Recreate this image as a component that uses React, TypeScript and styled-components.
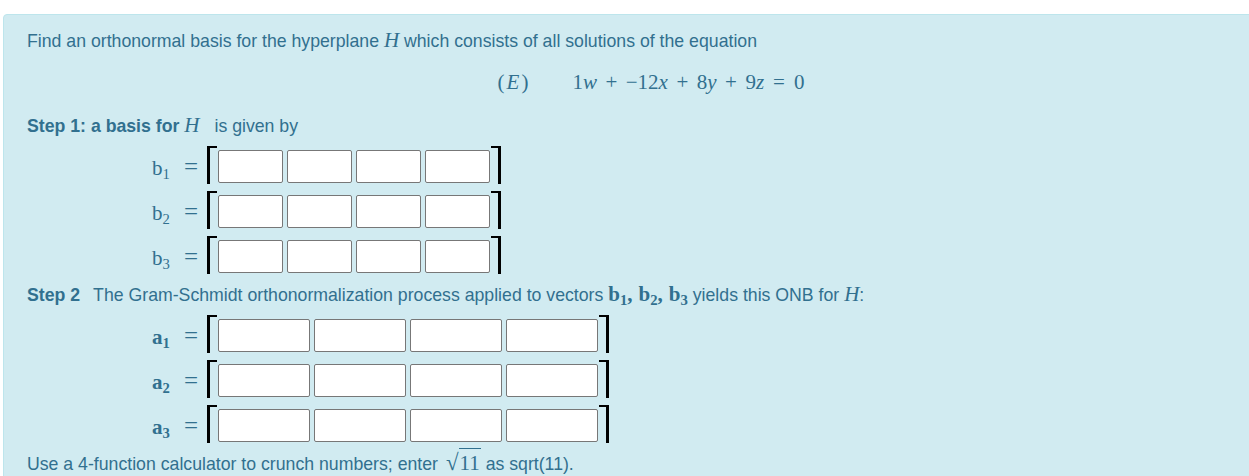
import styled, { createGlobalStyle } from "styled-components";

const GlobalStyle = createGlobalStyle`
  html, body {
    margin: 0;
    padding: 0;
    background: #ffffff;
    overflow: hidden;
  }
  body {
    font-family: "Liberation Sans", Arial, sans-serif;
  }
`;

const Page = styled.div`
  width: 1249px;
  height: 476px;
  overflow: hidden;
  padding: 14px 0 0 3px;
  box-sizing: border-box;
`;

const Panel = styled.div`
  width: 1296px;
  box-sizing: border-box;
  background: #d1ebf1;
  border: 1px solid #bde5ec;
  border-radius: 4px;
  padding: 16px 23px 30px;
  color: #31708f;
  font-size: 17.7px;
  line-height: 20px;
`;

const Line = styled.div<{ top: number }>`
  margin-top: ${(p) => p.top}px;
  white-space: nowrap;
`;

const Bold = styled.b`
  font-weight: 700;
`;

const Gap = styled.span<{ w: number }>`
  display: inline-block;
  width: ${(p) => p.w}px;
`;

const Math = styled.span<{ size?: number; bold?: boolean; italic?: boolean }>`
  font-family: "Liberation Serif", "Times New Roman", serif;
  font-size: ${(p) => p.size ?? 21}px;
  font-style: ${(p) => (p.italic ? "italic" : "normal")};
  font-weight: ${(p) => (p.bold ? 700 : 400)};
  line-height: 0;
`;

const Sub = styled.sub`
  font-size: 70%;
  vertical-align: -4px;
  line-height: 0;
`;

const Comma = styled.span`
  margin-right: 6px;
`;

const Display = styled.div`
  margin-top: 19px;
  display: flex;
  justify-content: center;
  align-items: baseline;
  gap: 42px;
  font-family: "Liberation Serif", "Times New Roman", serif;
  font-size: 21px;
  line-height: 24px;
`;

const Tag = styled.span`
  letter-spacing: 2px;
`;

const Op = styled.span<{ rel?: boolean }>`
  padding: 0 ${(p) => (p.rel ? 9 : 8.5)}px;
`;

const Rows = styled.div<{ top: number }>`
  margin-top: ${(p) => p.top}px;
  display: flex;
  flex-direction: column;
`;

const VRow = styled.div`
  height: 45px;
  display: flex;
  align-items: center;
  padding-left: 125px;
`;

const Label = styled.span<{ bold?: boolean }>`
  width: 32px;
  font-family: "Liberation Serif", "Times New Roman", serif;
  font-size: 21px;
  font-weight: ${(p) => (p.bold ? 700 : 400)};
  line-height: 24px;
  padding-top: 2px;
`;

const Equals = styled.span`
  width: 23px;
  font-family: "Liberation Serif", "Times New Roman", serif;
  font-size: 25px;
  line-height: 24px;
`;

const Bracket = styled.span<{ side: "left" | "right" }>`
  width: 7px;
  height: 36px;
  border-top: 2px solid #000;
  ${(p) =>
    p.side === "left"
      ? "border-left: 3px solid #000; margin-right: 1px;"
      : "border-right: 3px solid #000; margin-left: 1px;"}
  margin-top: -3px;
`;

const Cells = styled.div`
  display: flex;
  gap: 4px;
`;

const Cell = styled.input<{ w: number }>`
  width: ${(p) => p.w}px;
  height: 33px;
  box-sizing: border-box;
  margin: 0;
  padding: 0 4px;
  border: 1px solid #777;
  border-radius: 2px;
  background: #fff;
  outline: none;
`;

const Radical = styled.span`
  font-family: "Liberation Serif", "Times New Roman", serif;
  font-size: 23px;
  line-height: 0;
  margin-left: 3px;
`;

const Radicand = styled.span`
  font-family: "Liberation Serif", "Times New Roman", serif;
  font-size: 21px;
  line-height: 0;
  border-top: 1px solid #31708f;
  padding: 2px 1px 0 1px;
`;

function VectorRow({
  name,
  index,
  bold,
  cellWidth,
}: {
  name: string;
  index: number;
  bold?: boolean;
  cellWidth: number;
}) {
  return (
    <VRow>
      <Label bold={bold}>
        {name}
        <Sub>{index}</Sub>
      </Label>
      <Equals>=</Equals>
      <Bracket side="left" />
      <Cells>
        {[0, 1, 2, 3].map((i) => (
          <Cell key={i} w={cellWidth} type="text" />
        ))}
      </Cells>
      <Bracket side="right" />
    </VRow>
  );
}

export default function App() {
  return (
    <>
      <GlobalStyle />
      <Page>
        <Panel>
          <Line top={0}>
            Find an orthonormal basis for the hyperplane{" "}
            <Math italic>H</Math> which consists of all solutions of the
            equation
          </Line>

          <Display>
            <Tag>
              (<i>E</i>)
            </Tag>
            <span>
              1<i>w</i>
              <Op>+</Op>−12<i>x</i>
              <Op>+</Op>8<i>y</i>
              <Op>+</Op>9<i>z</i>
              <Op rel>=</Op>0
            </span>
          </Display>

          <Line top={22}>
            <Bold>Step 1: a basis for</Bold> <Math italic>H</Math>
            <Gap w={15} />
            is given by
          </Line>

          <Rows top={8}>
            {[1, 2, 3].map((i) => (
              <VectorRow key={i} name="b" index={i} cellWidth={65} />
            ))}
          </Rows>

          <Line top={6}>
            <Bold>Step 2</Bold>
            <Gap w={13} />
            The Gram-Schmidt orthonormalization process applied to vectors{" "}
            <Math bold>
              b<Sub>1</Sub>
              <Comma>,</Comma>b<Sub>2</Sub>
              <Comma>,</Comma>b<Sub>3</Sub>
            </Math>{" "}
            yields this ONB for <Math italic>H</Math>:
          </Line>

          <Rows top={8}>
            {[1, 2, 3].map((i) => (
              <VectorRow key={i} name="a" index={i} bold cellWidth={92} />
            ))}
          </Rows>

          <Line top={6}>
            Use a 4-function calculator to crunch numbers; enter{" "}
            <Radical>√</Radical>
            <Radicand>11</Radicand> as sqrt(11).
          </Line>
        </Panel>
      </Page>
    </>
  );
}
